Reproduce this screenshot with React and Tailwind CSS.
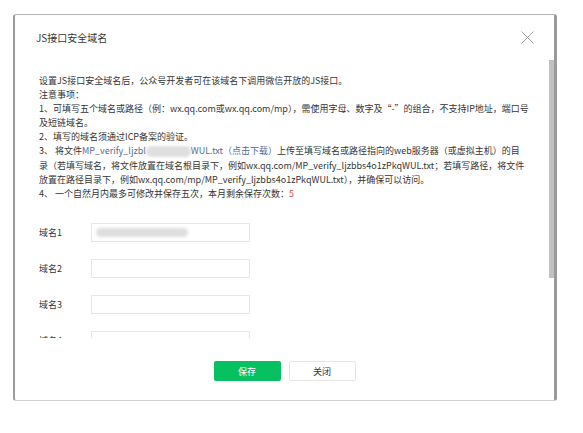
import React from 'react';

const font = { fontFamily: '"Noto Sans CJK SC", "Noto Sans", "Liberation Sans", sans-serif' };

const Blur = ({ className }) => (
  <span className={`inline-block align-middle rounded-full bg-[#dedede] blur-[1.5px] ${className}`} />
);

const domains = ['域名1', '域名2', '域名3', '域名4'];

const App = () => {
  return (
    <div className="w-[583px] h-[433px] bg-white relative overflow-hidden" style={font}>
      <div className="absolute left-[13px] top-[14px] w-[544px] h-[387px] bg-white border-l-2 border-r-[3px] border-t border-b border-l-[#9c9c9c] border-r-[#9a9a9a] border-t-[#b4b4b4] border-b-[#d0d0d0] rounded-[3px] flex flex-col">
        {/* header */}
        <div className="h-[45px] shrink-0 flex items-center justify-between pl-[21px] pr-[20px]">
          <span className="text-[10px] text-[#353535] leading-none">JS接口安全域名</span>
          <svg width="13" height="13" viewBox="0 0 13 13" className="mt-[-1px]">
            <path d="M0.5 0.5 L12.5 12.5 M12.5 0.5 L0.5 12.5" stroke="#a0a0a0" strokeWidth="1" fill="none" />
          </svg>
        </div>

        {/* body */}
        <div className="h-[278px] shrink-0 overflow-hidden pl-[24px] pt-[14px]">
          <div className="text-[9px] leading-[14.1px] text-[#353535] whitespace-nowrap">
            <div>设置JS接口安全域名后，公众号开发者可在该域名下调用微信开放的JS接口。</div>
            <div>注意事项：</div>
            <div>1、可填写五个域名或路径（例：wx.qq.com或wx.qq.com/mp），需使用字母、数字及“-”的组合，不支持IP地址，端口号</div>
            <div>及短链域名。</div>
            <div>2、填写的域名须通过ICP备案的验证。</div>
            <div>
              3、 将文件<span className="text-[#576b95]">MP_verify_ljzbl</span>
              <Blur className="w-[45px] h-[11px] mt-[-2px]" />
              <span className="text-[#576b95]">WUL.txt（点击下载）</span>上传至填写域名或路径指向的web服务器（或虚拟主机）的目
            </div>
            <div>录（若填写域名，将文件放置在域名根目录下，例如wx.qq.com/MP_verify_ljzbbs4o1zPkqWUL.txt；若填写路径，将文件</div>
            <div>放置在路径目录下，例如wx.qq.com/mp/MP_verify_ljzbbs4o1zPkqWUL.txt），并确保可以访问。</div>
            <div>
              4、 一个自然月内最多可修改并保存五次，本月剩余保存次数：<span className="text-[#e64340]">5</span>
            </div>
          </div>

          <div className="mt-[22px] flex flex-col gap-[17px]">
            {domains.map((d, i) => (
              <div key={d} className="flex items-center">
                <span className="w-[52px] text-[9px] text-[#353535]">{d}</span>
                <div className="w-[159px] h-[19px] border border-[#e7e7e7] bg-white flex items-center pl-[4px]">
                  {i === 0 && <Blur className="w-[92px] h-[9px] bg-[#d6d6d6]" />}
                </div>
              </div>
            ))}
          </div>
        </div>

        {/* footer */}
        <div className="flex-1 flex justify-center items-start pt-[23px] gap-[8px]">
          <button className="w-[67px] h-[20px] rounded-[2px] bg-[#07c160] text-white text-[9px] leading-none">保存</button>
          <button className="w-[67px] h-[20px] rounded-[2px] bg-white border border-[#e5e5e5] text-[#353535] text-[9px] leading-none">关闭</button>
        </div>

        {/* scrollbar thumb */}
        <div className="absolute right-0 top-[45px] w-[5px] h-[218px] bg-[#c1c1c1]" />
      </div>
    </div>
  );
};

export default App;
